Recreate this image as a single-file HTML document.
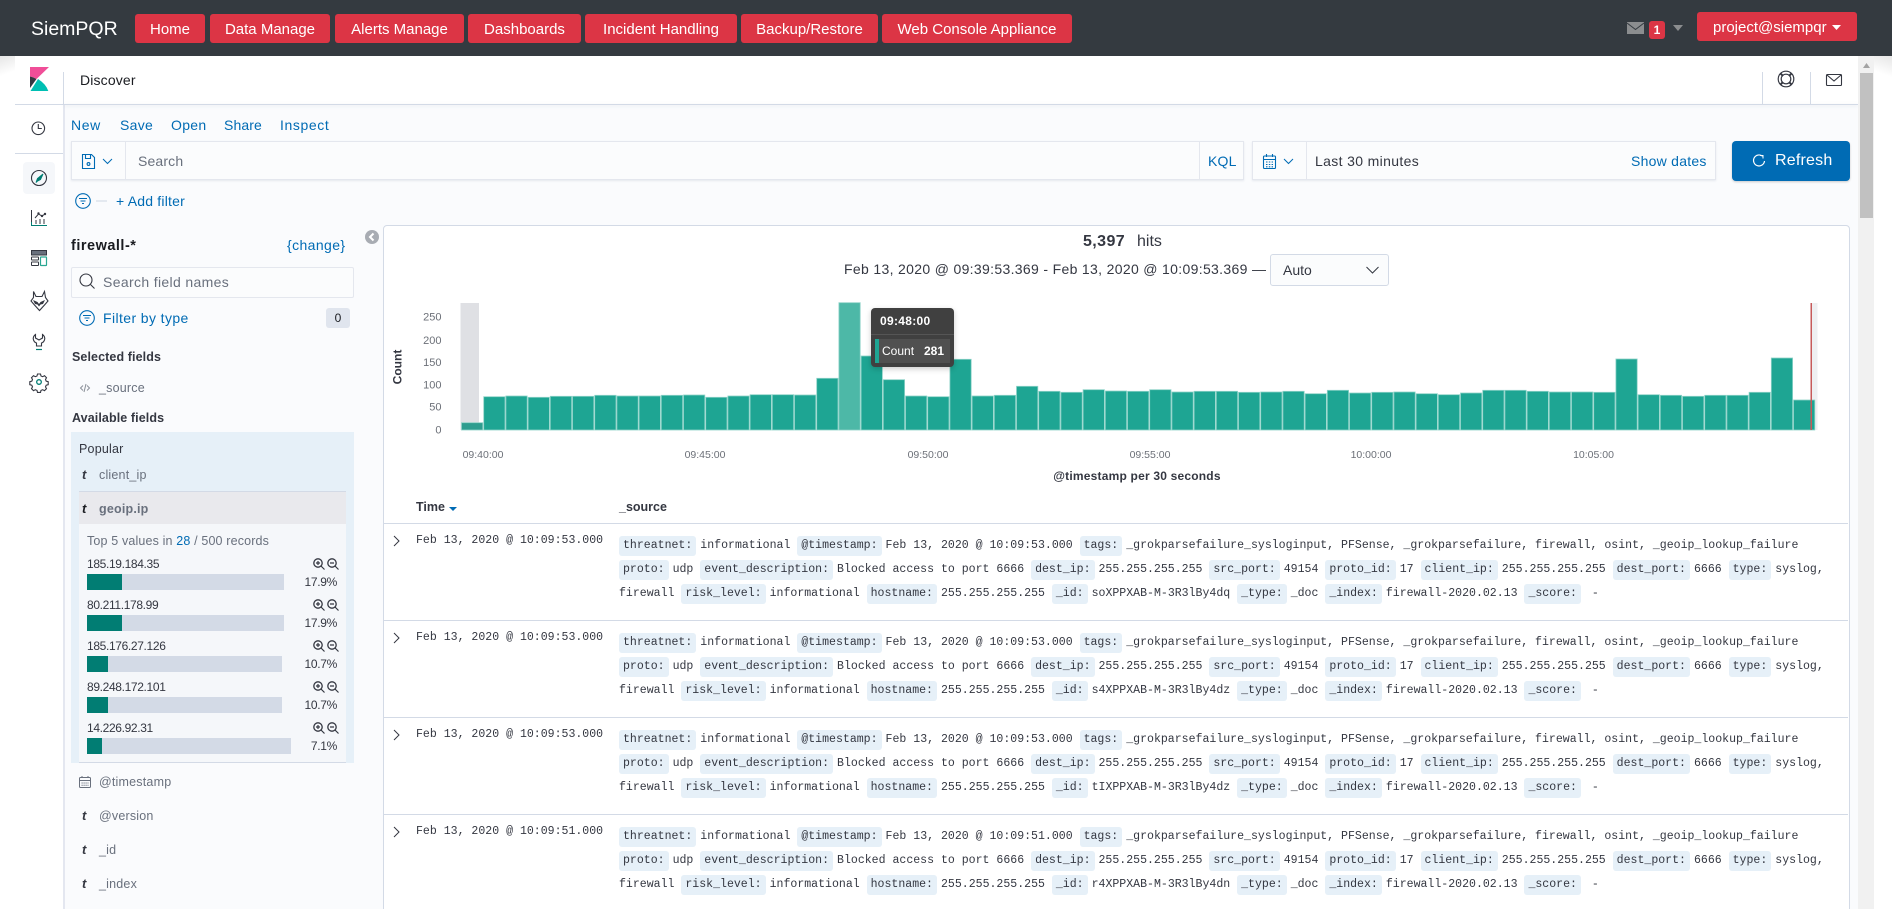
<!DOCTYPE html>
<html><head><meta charset="utf-8"><title>SiemPQR Discover</title>
<style>
*{box-sizing:border-box}
html,body{margin:0;padding:0;width:1892px;height:909px;overflow:hidden;background:#fff;font-family:"Liberation Sans",sans-serif;color:#343741}
#root{position:relative;width:1892px;height:909px;overflow:hidden;background:#fff}
.a{position:absolute;white-space:nowrap}
.t{position:absolute;white-space:nowrap;line-height:20px;font-size:14px}
.btn{position:absolute;top:14px;height:29px;background:#dc3545;border-radius:3px;color:#fff;font-size:15px;line-height:31px;text-align:center;white-space:nowrap}
.l{color:#006bb4}
.f{position:absolute;left:99px;font-size:12.5px;line-height:20px;color:#69707d;white-space:nowrap;letter-spacing:.2px}
.ty{position:absolute;left:82px;font:italic bold 13px/20px "Liberation Sans",sans-serif;color:#343741}
.v{position:absolute;left:87px;font-size:12px;line-height:16px;letter-spacing:-.35px;white-space:nowrap;color:#343741}
.p{position:absolute;right:1555px;font-size:12px;line-height:16px;letter-spacing:-.3px;white-space:nowrap;color:#343741}
.bg{position:absolute;left:87px;height:16px;background:#d3dae6}
.fg{position:absolute;left:87px;height:16px;background:#017d73}
.hr{position:absolute;left:384px;width:1464px;height:1px;background:#d3dae6}
.tm{position:absolute;left:416px;font:11.55px/20px "Liberation Mono",monospace;white-space:pre;color:#343741}
.ch{position:absolute;left:393px;width:7px;height:12px}
.src{position:absolute;left:619px;width:1225px;font:11.55px/24px "Liberation Mono",monospace;color:#343741}
.src div{height:24px;white-space:pre}
.src b{display:inline-block;height:20px;line-height:20px;padding:0 4px;margin-right:4px;background:#e6f0f8;border-radius:3px;font-weight:normal;vertical-align:middle}
.src span{vertical-align:middle}
svg{position:absolute;overflow:visible}
</style></head>
<body><div id="root">
<!-- page surface -->
<div class="a" style="left:64px;top:105px;width:1794px;height:804px;background:#fafbfd"></div>
<div class="a" style="left:63px;top:105px;width:2px;height:804px;background:#e4e7f0"></div>
<div class="a" style="left:0;top:56px;width:15px;height:24px;background:linear-gradient(160deg,#e6e6e6,#fff 70%)"></div>
<div class="a" style="left:1874px;top:56px;width:18px;height:24px;background:linear-gradient(200deg,#e6e6e6,#fff 70%)"></div>

<!-- app header -->
<div class="a" style="left:0;top:0;width:1892px;height:56px;background:#343a40"></div>
<div class="t" style="left:31px;top:19px;font-size:19.5px;color:#fff">SiemPQR</div>
<div class="btn" style="left:135px;width:70px">Home</div>
<div class="btn" style="left:210px;width:120px">Data Manage</div>
<div class="btn" style="left:335px;width:129px">Alerts Manage</div>
<div class="btn" style="left:468px;width:113px">Dashboards</div>
<div class="btn" style="left:585px;width:152px">Incident Handling</div>
<div class="btn" style="left:741px;width:137px">Backup/Restore</div>
<div class="btn" style="left:882px;width:190px">Web Console Appliance</div>
<svg style="left:1627px;top:22px" width="17" height="12" viewBox="0 0 17 12"><rect width="17" height="12" fill="#8b8d8f"/><path d="M0 1l8.500 6.500L17 1" fill="none" stroke="#343a40" stroke-width="1"/></svg>
<div class="a" style="left:1649px;top:21px;width:16px;height:18px;background:#dc3545;border-radius:3px;color:#fff;font:bold 12px/19px 'Liberation Sans',sans-serif;text-align:center">1</div>
<svg style="left:1673px;top:25px" width="10" height="6"><path d="M0 0h10L5 6z" fill="#8b8d8f"/></svg>
<div class="btn" style="left:1697px;top:12px;width:160px;text-align:left;padding-left:16px">project@siempqr</div>
<svg style="left:1832px;top:25px" width="9" height="5"><path d="M0 0h9L4.500 5z" fill="#fff"/></svg>

<!-- Kibana nav -->
<svg style="left:0;top:0" width="70" height="420" viewBox="0 0 70 420">
 <path d="M30 67h19L36.500 79Q33 77 30 76.500z" fill="#f04e98"/>
 <path d="M30 76.500Q33 77 36.500 79L30 88z" fill="#343741"/>
 <path d="M30.500 91L38 79Q46 84 48.300 91z" fill="#00bfb3"/>
 <rect x="15" y="104" width="48" height="1" fill="#d3dae6"/>
 <rect x="15" y="153" width="48" height="1" fill="#d3dae6"/>
 <rect x="63" y="72" width="1" height="33" fill="#d3dae6"/>
 <circle cx="38.300" cy="128.300" r="6.300" fill="none" stroke="#343741" stroke-width="1.100"/>
 <path d="M38.300 124v4.500h3.500" fill="none" stroke="#343741" stroke-width="1.100"/>
 <rect x="23" y="162" width="32" height="32" rx="4" fill="#f5f7fa"/>
 <circle cx="39" cy="178" r="7.500" fill="none" stroke="#343741" stroke-width="1.100"/>
 <path d="M43 174l-2.500 5.500-3 1.500-1.500 1.500 1.500-4z" fill="#017d73" stroke="#017d73"/>
 <path d="M31.500 210v15.500H47" fill="none" stroke="#017d73" stroke-width="1"/>
 <path d="M31.500 210v12" fill="none" stroke="#343741"/>
 <path d="M35 218l3.500-4 3.500 2 3-2" fill="none" stroke="#343741"/>
 <circle cx="38.500" cy="213.500" r="1.200" fill="#343741"/><circle cx="42" cy="216" r="1.200" fill="#343741"/><circle cx="45" cy="214" r="1.200" fill="#343741"/>
 <path d="M36 220v4M40 219v5M44 219v5" stroke="#343741"/>
 <rect x="31.500" y="250.500" width="15" height="4.500" fill="#69707d" stroke="#343741"/>
 <rect x="31.500" y="257" width="7" height="3" rx=".5" fill="none" stroke="#343741"/>
 <rect x="31.500" y="262" width="7" height="3.500" rx=".5" fill="none" stroke="#343741"/>
 <rect x="40.500" y="257" width="6" height="8.500" rx=".5" fill="none" stroke="#2aa792" stroke-width="1.200"/>
 <path d="M33.500 291.500l2.500 5h6l2.500-5 1 6 2.500 3.500-3.500 4-5 5.500-5-5.500-3.500-4 2.500-3.500z" fill="none" stroke="#343741" stroke-width="1.100"/>
 <path d="M33 300l4.500 2 1.500 2 1.500-2 4.500-2-2 4-2.500.5-1.500 2-1.500-2-2.500-.5z" fill="#343741"/>
 <path d="M35.500 334.500v3.500l3.500 2 3.500-2v-3.500q3 2 2 5.500-1 2.500-3 3v3h-5v-3q-2-.5-3-3-1-3.500 2-5.500z" fill="none" stroke="#343741" stroke-width="1.100"/>
 <path d="M36 349.500h6" stroke="#017d73" stroke-width="1.200"/>
 <circle cx="39" cy="382" r="2.300" fill="none" stroke="#017d73" stroke-width="1.300"/>
 <path d="M37.500 374h3l.5 2 1.700.7 1.800-1 2 2-1 1.800.7 1.700 2 .5v3l-2 .5-.7 1.700 1 1.800-2 2-1.800-1-1.700.7-.5 2h-3l-.5-2-1.700-.7-1.800 1-2-2 1-1.800-.7-1.700-2-.5v-3l2-.5.7-1.700-1-1.800 2-2 1.800 1 1.700-.7z" fill="none" stroke="#343741" stroke-width="1.100"/>
</svg>

<!-- top nav -->
<div class="a" style="left:64px;top:104px;width:1794px;height:1px;background:#d3dae6;box-shadow:0 1px 3px rgba(152,162,179,.25)"></div>
<div class="t" style="left:80px;top:70px;letter-spacing:.15px;color:#1a1c21">Discover</div>
<div class="a" style="left:1762px;top:72px;width:1px;height:32px;background:#d3dae6"></div>
<div class="a" style="left:1810px;top:72px;width:1px;height:32px;background:#d3dae6"></div>
<svg style="left:1776px;top:69px" width="20" height="20" viewBox="0 0 20 20" fill="none" stroke="#343741" stroke-width="1.200"><circle cx="10" cy="10" r="7.800"/><circle cx="10" cy="10" r="4.800"/><path d="M4.500 4.500l2.200 2.200M15.500 4.500l-2.200 2.200M4.500 15.500l2.200-2.200M15.500 15.500l-2.200-2.200" stroke-width="2"/></svg>
<svg style="left:1826px;top:74px" width="16" height="12" viewBox="0 0 16 12" fill="none" stroke="#343741" stroke-width="1.100"><rect x=".5" y=".5" width="15" height="11" rx="1"/><path d="M1 1l7 6 7-6"/></svg>

<!-- scrollbar -->
<div class="a" style="left:1858px;top:56px;width:16px;height:853px;background:#f1f1f1"></div>
<div class="a" style="left:1860px;top:73px;width:13px;height:145px;background:#c1c1c1"></div>
<svg style="left:1863px;top:63px" width="7" height="5"><path d="M0 5L3.500 0 7 5z" fill="#a3a3a3"/></svg>

<!-- query bar -->
<div class="t l" style="left:71px;top:115px;letter-spacing:.6px">New</div>
<div class="t l" style="left:120px;top:115px;letter-spacing:.3px">Save</div>
<div class="t l" style="left:171px;top:115px;letter-spacing:.3px">Open</div>
<div class="t l" style="left:224px;top:115px;letter-spacing:.1px">Share</div>
<div class="t l" style="left:280px;top:115px;letter-spacing:.6px">Inspect</div>

<div class="a" style="left:71px;top:141px;width:1173px;height:39px;background:#fbfcfd;border:1px solid #e4e7ee;box-shadow:0 1px 2px rgba(152,162,179,.2)"></div>
<div class="a" style="left:125px;top:141px;width:1px;height:39px;background:#e4e7ee"></div>
<div class="a" style="left:1199px;top:141px;width:1px;height:39px;background:#e4e7ee"></div>
<svg style="left:82px;top:154px" width="34" height="15" viewBox="0 0 34 15" fill="none" stroke="#006bb4" stroke-width="1.100"><path d="M.5.5h9l3 3v11H.5z"/><path d="M3.500.5v4h5v-4"/><circle cx="6.500" cy="10" r="1.400"/><path d="M21 5l4.500 4.500L30 5" stroke-width="1"/></svg>
<div class="t" style="left:138px;top:151px;color:#69707d;letter-spacing:.15px">Search</div>
<div class="t l" style="left:1208px;top:151px;letter-spacing:.2px">KQL</div>

<div class="a" style="left:1252px;top:141px;width:464px;height:39px;background:#fbfcfd;border:1px solid #e4e7ee;box-shadow:0 1px 2px rgba(152,162,179,.2)"></div>
<div class="a" style="left:1306px;top:141px;width:1px;height:39px;background:#e4e7ee"></div>
<svg style="left:1263px;top:154px" width="34" height="15" viewBox="0 0 34 15" fill="none" stroke="#006bb4" stroke-width="1.100"><rect x=".5" y="2" width="12" height="12.500" rx="1"/><path d="M.5 5.500h12M3.500 0v3M9.500 0v3"/><path d="M3 8h7M3 10.500h7M3 12.800h7" stroke-dasharray="1.500 1.300"/><path d="M21 5l4.500 4.500L30 5" stroke-width="1"/></svg>
<div class="t" style="left:1315px;top:151px;letter-spacing:.35px">Last 30 minutes</div>
<div class="t l" style="left:1631px;top:151px;font-size:14px;letter-spacing:.25px">Show dates</div>

<div class="a" style="left:1732px;top:141px;width:118px;height:40px;background:#006bb4;border-radius:4px;box-shadow:0 1px 2px rgba(0,0,0,.2)"></div>
<svg style="left:1752px;top:154px" width="14" height="14" viewBox="0 0 14 14" fill="none" stroke="#fff" stroke-width="1.200"><path d="M10.500 2.200A5.500 5.500 0 1 0 12.500 7"/><path d="M8 1.500h3v3" stroke-width="1"/></svg>
<div class="t" style="left:1775px;top:151px;font-size:16px;color:#fff;letter-spacing:.2px">Refresh</div>

<svg style="left:75px;top:193px" width="32" height="16" viewBox="0 0 32 16" fill="none" stroke="#006bb4" stroke-width="1.100"><circle cx="8" cy="8" r="7.300"/><path d="M4 5.500h8M5.500 8h5M7 10.500h2"/><path d="M21 8h11" stroke="#d3dae6"/></svg>
<div class="t l" style="left:116px;top:191px;letter-spacing:.2px">+ Add filter</div>

<!-- sidebar -->
<div class="t" style="left:71px;top:236px;font-size:14.5px;font-weight:bold;color:#1a1c21;letter-spacing:.5px">firewall-*</div>
<div class="t l" style="left:287px;top:235px;letter-spacing:.4px">{change}</div>
<svg style="left:365px;top:230px" width="14" height="14"><circle cx="7" cy="7" r="7" fill="#a8acb3"/><path d="M8.500 3.500L5 7l3.500 3.500" fill="none" stroke="#fff" stroke-width="2"/></svg>

<div class="a" style="left:71px;top:267px;width:283px;height:31px;background:#fbfcfd;border:1px solid #e4e7ee;border-radius:2px"></div>
<svg style="left:79px;top:273px" width="16" height="16" viewBox="0 0 16 16" fill="none" stroke="#343741" stroke-width="1.100"><circle cx="7" cy="7" r="6"/><path d="M11.500 11.500l4 4"/></svg>
<div class="t" style="left:103px;top:272px;color:#69707d;letter-spacing:.35px">Search field names</div>
<svg style="left:79px;top:310px" width="16" height="16" viewBox="0 0 16 16" fill="none" stroke="#006bb4" stroke-width="1.100"><circle cx="8" cy="8" r="7.300"/><path d="M4 5.500h8M5.500 8h5M7 10.500h2"/></svg>
<div class="t l" style="left:103px;top:308px;letter-spacing:.4px">Filter by type</div>
<div class="a" style="left:326px;top:308px;width:24px;height:20px;background:#e0e5ee;border-radius:3px;font-size:12px;line-height:20px;text-align:center;color:#1a1c21">0</div>

<div class="t" style="left:72px;top:347px;font-size:12.5px;font-weight:bold;letter-spacing:.1px">Selected fields</div>
<svg style="left:80px;top:383px" width="10" height="10" viewBox="0 0 10 10" fill="none" stroke="#8a8f98"><path d="M3 2.500L.5 5 3 7.500M7 2.500L9.500 5 7 7.500M6 1L4 9"/></svg>
<div class="f" style="top:378px">_source</div>
<div class="t" style="left:72px;top:408px;font-size:12.5px;font-weight:bold;letter-spacing:.1px">Available fields</div>

<div class="a" style="left:71px;top:432px;width:283px;height:331px;background:#e6f0f8"></div>
<div class="t" style="left:79px;top:439px;font-size:12.5px;letter-spacing:.2px">Popular</div>
<div class="ty" style="top:465px">t</div>
<div class="f" style="top:465px">client_ip</div>
<div class="a" style="left:79px;top:491px;width:267px;height:33px;background:#e9e9ed;border-top:1px solid #d3dae6"></div>
<div class="ty" style="top:499px;color:#1a1c21">t</div>
<div class="f" style="top:499px;font-weight:bold">geoip.ip</div>
<div class="a" style="left:79px;top:524px;width:267px;height:239px;background:#f5f7fa;border-bottom:1px solid #d3dae6"></div>
<div class="t" style="left:87px;top:531px;font-size:12.5px;color:#69707d;letter-spacing:.15px">Top 5 values in <span class="l">28</span> / 500 records</div>

<svg width="0" height="0" style="left:0;top:0"><defs>
<symbol id="zp" viewBox="0 0 12 12"><circle cx="5" cy="5" r="4.200" fill="none" stroke="#343741" stroke-width="1.300"/><path d="M8 8l3.500 3.500M3 5h4M5 3v4" stroke="#343741" stroke-width="1.200" fill="none"/></symbol>
<symbol id="zm" viewBox="0 0 12 12"><circle cx="5" cy="5" r="4.200" fill="none" stroke="#343741" stroke-width="1.300"/><path d="M8 8l3.500 3.500M3 5h4" stroke="#343741" stroke-width="1.200" fill="none"/></symbol>
</defs></svg>

<div class="v" style="top:556px">185.19.184.35</div>
<div class="bg" style="top:574px;width:197px"></div><div class="fg" style="top:574px;width:35px"></div>
<div class="p" style="top:574px">17.9%</div>
<svg style="left:313px;top:558px" width="12" height="12"><use href="#zp"/></svg><svg style="left:327px;top:558px" width="12" height="12"><use href="#zm"/></svg>

<div class="v" style="top:597px">80.211.178.99</div>
<div class="bg" style="top:615px;width:197px"></div><div class="fg" style="top:615px;width:35px"></div>
<div class="p" style="top:615px">17.9%</div>
<svg style="left:313px;top:599px" width="12" height="12"><use href="#zp"/></svg><svg style="left:327px;top:599px" width="12" height="12"><use href="#zm"/></svg>

<div class="v" style="top:638px">185.176.27.126</div>
<div class="bg" style="top:656px;width:195px"></div><div class="fg" style="top:656px;width:21px"></div>
<div class="p" style="top:656px">10.7%</div>
<svg style="left:313px;top:640px" width="12" height="12"><use href="#zp"/></svg><svg style="left:327px;top:640px" width="12" height="12"><use href="#zm"/></svg>

<div class="v" style="top:679px">89.248.172.101</div>
<div class="bg" style="top:697px;width:195px"></div><div class="fg" style="top:697px;width:21px"></div>
<div class="p" style="top:697px">10.7%</div>
<svg style="left:313px;top:681px" width="12" height="12"><use href="#zp"/></svg><svg style="left:327px;top:681px" width="12" height="12"><use href="#zm"/></svg>

<div class="v" style="top:720px">14.226.92.31</div>
<div class="bg" style="top:738px;width:204px"></div><div class="fg" style="top:738px;width:15px"></div>
<div class="p" style="top:738px">7.1%</div>
<svg style="left:313px;top:722px" width="12" height="12"><use href="#zp"/></svg><svg style="left:327px;top:722px" width="12" height="12"><use href="#zm"/></svg>

<svg style="left:79px;top:776px" width="12" height="12" viewBox="0 0 12 12" fill="none" stroke="#69707d"><rect x=".5" y="1.500" width="11" height="10" rx="1"/><path d="M.5 4.500h11M3 0v2M9 0v2"/><path d="M2.500 7h7M2.500 9.300h7" stroke-dasharray="1.200 .8"/></svg>
<div class="f" style="top:772px">@timestamp</div>
<div class="ty" style="top:806px">t</div><div class="f" style="top:806px">@version</div>
<div class="ty" style="top:840px">t</div><div class="f" style="top:840px">_id</div>
<div class="ty" style="top:874px">t</div><div class="f" style="top:874px">_index</div>

<!-- results card -->
<div class="a" style="left:383px;top:225px;width:1467px;height:700px;background:#fff;border:1px solid #d3dae6;border-radius:4px"></div>
<div class="t" style="left:1083px;top:232px;font-size:16px;font-weight:bold;letter-spacing:.4px">5,397</div>
<div class="t" style="left:1137px;top:232px;font-size:16px">hits</div>
<div class="t" style="left:844px;top:259px;font-size:14px;letter-spacing:.33px">Feb 13, 2020 @ 09:39:53.369 - Feb 13, 2020 @ 10:09:53.369 —</div>
<div class="a" style="left:1270px;top:254px;width:119px;height:32px;background:#fbfcfd;border:1px solid #d3dae6;border-radius:3px"></div>
<div class="t" style="left:1283px;top:260px;font-size:14px">Auto</div>
<svg style="left:1366px;top:266px" width="13" height="8" fill="none" stroke="#343741"><path d="M.5 1l6 6 6-6"/></svg>

<!-- chart -->
<svg style="left:0;top:0" width="1892" height="909" viewBox="0 0 1892 909">
 <rect x="460.500" y="303" width="18.500" height="127" fill="#dfe0e4"/>
 <rect x="1811" y="303" width="6.500" height="127" fill="#eeeff1"/>
 <g fill="#1ea593" stroke="#8fd3c8" stroke-width=".8">
  <rect x="461.500" y="422.700" width="21.300" height="7.300" fill="#2e9d8f"/>
  <rect x="483.700" y="396.700" width="21.300" height="33.300"/>
  <rect x="505.900" y="396" width="21.300" height="34"/>
  <rect x="528.100" y="397.300" width="21.300" height="32.700"/>
  <rect x="550.300" y="396.300" width="21.300" height="33.700"/>
  <rect x="572.500" y="396.300" width="21.300" height="33.700"/>
  <rect x="594.700" y="395.300" width="21.300" height="34.700"/>
  <rect x="616.900" y="396" width="21.300" height="34"/>
  <rect x="639.100" y="396" width="21.300" height="34"/>
  <rect x="661.300" y="395.300" width="21.300" height="34.700"/>
  <rect x="683.500" y="395" width="21.300" height="35"/>
  <rect x="705.700" y="397.300" width="21.300" height="32.700"/>
  <rect x="727.900" y="396" width="21.300" height="34"/>
  <rect x="750.100" y="394.700" width="21.300" height="35.300"/>
  <rect x="772.300" y="394.700" width="21.300" height="35.300"/>
  <rect x="794.500" y="395" width="21.300" height="35"/>
  <rect x="816.700" y="378.300" width="21.300" height="51.700"/>
  <rect x="838.900" y="302.700" width="21.300" height="127.300" fill="#4db8a7"/>
  <rect x="861.100" y="356" width="21.300" height="74"/>
  <rect x="883.300" y="379.700" width="21.300" height="50.300"/>
  <rect x="905.500" y="396" width="21.300" height="34"/>
  <rect x="927.700" y="396.700" width="21.300" height="33.300"/>
  <rect x="949.900" y="359.300" width="21.300" height="70.700"/>
  <rect x="972.100" y="396" width="21.300" height="34"/>
  <rect x="994.300" y="395.300" width="21.300" height="34.700"/>
  <rect x="1016.500" y="386.300" width="21.300" height="43.700"/>
  <rect x="1038.700" y="391.300" width="21.300" height="38.700"/>
  <rect x="1060.900" y="392.300" width="21.300" height="37.700"/>
  <rect x="1083.100" y="389.700" width="21.300" height="40.300"/>
  <rect x="1105.300" y="391" width="21.300" height="39"/>
  <rect x="1127.500" y="391.300" width="21.300" height="38.700"/>
  <rect x="1149.700" y="389.700" width="21.300" height="40.300"/>
  <rect x="1171.900" y="392" width="21.300" height="38"/>
  <rect x="1194.100" y="391.300" width="21.300" height="38.700"/>
  <rect x="1216.300" y="391.300" width="21.300" height="38.700"/>
  <rect x="1238.500" y="392.300" width="21.300" height="37.700"/>
  <rect x="1260.700" y="392" width="21.300" height="38"/>
  <rect x="1282.900" y="391.300" width="21.300" height="38.700"/>
  <rect x="1305.100" y="393.700" width="21.300" height="36.300"/>
  <rect x="1327.300" y="390.300" width="21.300" height="39.700"/>
  <rect x="1349.500" y="393" width="21.300" height="37"/>
  <rect x="1371.700" y="392.300" width="21.300" height="37.700"/>
  <rect x="1393.900" y="392" width="21.300" height="38"/>
  <rect x="1416.100" y="393.700" width="21.300" height="36.300"/>
  <rect x="1438.300" y="394.700" width="21.300" height="35.300"/>
  <rect x="1460.500" y="393" width="21.300" height="37"/>
  <rect x="1482.700" y="390.300" width="21.300" height="39.700"/>
  <rect x="1504.900" y="390.300" width="21.300" height="39.700"/>
  <rect x="1527.100" y="391.300" width="21.300" height="38.700"/>
  <rect x="1549.300" y="392" width="21.300" height="38"/>
  <rect x="1571.500" y="392" width="21.300" height="38"/>
  <rect x="1593.700" y="392.300" width="21.300" height="37.700"/>
  <rect x="1615.900" y="359" width="21.300" height="71"/>
  <rect x="1638.100" y="394.700" width="21.300" height="35.300"/>
  <rect x="1660.300" y="395.300" width="21.300" height="34.700"/>
  <rect x="1682.500" y="396.300" width="21.300" height="33.700"/>
  <rect x="1704.700" y="395.300" width="21.300" height="34.700"/>
  <rect x="1726.900" y="395.300" width="21.300" height="34.700"/>
  <rect x="1749.100" y="392.300" width="21.300" height="37.700"/>
  <rect x="1771.300" y="358" width="21.300" height="72"/>
  <rect x="1793.500" y="400" width="21.300" height="30"/>
 </g>
 <rect x="1810.500" y="303" width="1.500" height="127" fill="#c65a5a"/>
 <g font-family="Liberation Sans, sans-serif" font-size="11" fill="#6c7078" text-anchor="end">
  <text x="441.500" y="320.500">250</text><text x="441.500" y="344">200</text><text x="441.500" y="366">150</text><text x="441.500" y="388.500">100</text><text x="441.500" y="410.500">50</text><text x="441.500" y="433.500">0</text>
 </g>
 <g font-family="Liberation Sans, sans-serif" font-size="10.500" fill="#6c7078" text-anchor="middle">
  <text x="483" y="458">09:40:00</text><text x="705" y="458">09:45:00</text><text x="928" y="458">09:50:00</text><text x="1150" y="458">09:55:00</text><text x="1371" y="458">10:00:00</text><text x="1593.500" y="458">10:05:00</text>
 </g>
 <text transform="translate(401.500 367) rotate(-90)" font-family="Liberation Sans, sans-serif" font-size="12" font-weight="bold" fill="#343741" text-anchor="middle">Count</text>
 <text x="1137" y="480" font-family="Liberation Sans, sans-serif" font-size="12" font-weight="bold" fill="#343741" text-anchor="middle" letter-spacing=".2">@timestamp per 30 seconds</text>
</svg>

<!-- tooltip -->
<div class="a" style="left:871px;top:308px;width:83px;height:59px;background:#404040;border-radius:4px;box-shadow:0 2px 6px rgba(0,0,0,.2)"></div>
<div class="a" style="left:871px;top:334px;width:83px;height:1px;background:#555"></div>
<div class="a" style="left:875px;top:339px;width:75px;height:24px;background:#505050"></div>
<div class="a" style="left:875px;top:339px;width:4px;height:24px;background:#1ea593"></div>
<div class="t" style="left:880px;top:311px;font-size:12px;font-weight:bold;color:#fff;letter-spacing:.3px">09:48:00</div>
<div class="t" style="left:882px;top:341px;font-size:12px;color:#fff">Count</div>
<div class="t" style="left:924px;top:341px;font-size:12px;font-weight:bold;color:#fff">281</div>

<!-- table -->
<div class="t" style="left:416px;top:497px;font-size:12.5px;font-weight:bold">Time</div>
<svg style="left:449px;top:507px" width="8" height="4"><path d="M0 0h8L4 4z" fill="#006bb4"/></svg>
<div class="t" style="left:619px;top:497px;font-size:12.5px;font-weight:bold">_source</div>

<div class="hr" style="top:523px"></div>
<svg class="ch" style="top:535px" viewBox="0 0 7 12" fill="none" stroke="#343741"><path d="M1 1l5 5-5 5"/></svg>
<div class="tm" style="top:531px">Feb 13, 2020 @ 10:09:53.000</div>
<div class="src" style="top:534px"><div><b>threatnet:</b><span>informational </span><b>@timestamp:</b><span>Feb 13, 2020 @ 10:09:53.000 </span><b>tags:</b><span>_grokparsefailure_sysloginput, PFSense, _grokparsefailure, firewall, osint, _geoip_lookup_failure</span></div><div><b>proto:</b><span>udp </span><b>event_description:</b><span>Blocked access to port 6666 </span><b>dest_ip:</b><span>255.255.255.255 </span><b>src_port:</b><span>49154 </span><b>proto_id:</b><span>17 </span><b>client_ip:</b><span>255.255.255.255 </span><b>dest_port:</b><span>6666 </span><b>type:</b><span>syslog,</span></div><div><span>firewall </span><b>risk_level:</b><span>informational </span><b>hostname:</b><span>255.255.255.255 </span><b>_id:</b><span>soXPPXAB-M-3R3lBy4dq </span><b>_type:</b><span>_doc </span><b>_index:</b><span>firewall-2020.02.13 </span><b>_score:</b><span> -</span></div></div>

<div class="hr" style="top:620px"></div>
<svg class="ch" style="top:632px" viewBox="0 0 7 12" fill="none" stroke="#343741"><path d="M1 1l5 5-5 5"/></svg>
<div class="tm" style="top:628px">Feb 13, 2020 @ 10:09:53.000</div>
<div class="src" style="top:631px"><div><b>threatnet:</b><span>informational </span><b>@timestamp:</b><span>Feb 13, 2020 @ 10:09:53.000 </span><b>tags:</b><span>_grokparsefailure_sysloginput, PFSense, _grokparsefailure, firewall, osint, _geoip_lookup_failure</span></div><div><b>proto:</b><span>udp </span><b>event_description:</b><span>Blocked access to port 6666 </span><b>dest_ip:</b><span>255.255.255.255 </span><b>src_port:</b><span>49154 </span><b>proto_id:</b><span>17 </span><b>client_ip:</b><span>255.255.255.255 </span><b>dest_port:</b><span>6666 </span><b>type:</b><span>syslog,</span></div><div><span>firewall </span><b>risk_level:</b><span>informational </span><b>hostname:</b><span>255.255.255.255 </span><b>_id:</b><span>s4XPPXAB-M-3R3lBy4dz </span><b>_type:</b><span>_doc </span><b>_index:</b><span>firewall-2020.02.13 </span><b>_score:</b><span> -</span></div></div>

<div class="hr" style="top:717px"></div>
<svg class="ch" style="top:729px" viewBox="0 0 7 12" fill="none" stroke="#343741"><path d="M1 1l5 5-5 5"/></svg>
<div class="tm" style="top:725px">Feb 13, 2020 @ 10:09:53.000</div>
<div class="src" style="top:728px"><div><b>threatnet:</b><span>informational </span><b>@timestamp:</b><span>Feb 13, 2020 @ 10:09:53.000 </span><b>tags:</b><span>_grokparsefailure_sysloginput, PFSense, _grokparsefailure, firewall, osint, _geoip_lookup_failure</span></div><div><b>proto:</b><span>udp </span><b>event_description:</b><span>Blocked access to port 6666 </span><b>dest_ip:</b><span>255.255.255.255 </span><b>src_port:</b><span>49154 </span><b>proto_id:</b><span>17 </span><b>client_ip:</b><span>255.255.255.255 </span><b>dest_port:</b><span>6666 </span><b>type:</b><span>syslog,</span></div><div><span>firewall </span><b>risk_level:</b><span>informational </span><b>hostname:</b><span>255.255.255.255 </span><b>_id:</b><span>tIXPPXAB-M-3R3lBy4dz </span><b>_type:</b><span>_doc </span><b>_index:</b><span>firewall-2020.02.13 </span><b>_score:</b><span> -</span></div></div>

<div class="hr" style="top:814px"></div>
<svg class="ch" style="top:826px" viewBox="0 0 7 12" fill="none" stroke="#343741"><path d="M1 1l5 5-5 5"/></svg>
<div class="tm" style="top:822px">Feb 13, 2020 @ 10:09:51.000</div>
<div class="src" style="top:825px"><div><b>threatnet:</b><span>informational </span><b>@timestamp:</b><span>Feb 13, 2020 @ 10:09:51.000 </span><b>tags:</b><span>_grokparsefailure_sysloginput, PFSense, _grokparsefailure, firewall, osint, _geoip_lookup_failure</span></div><div><b>proto:</b><span>udp </span><b>event_description:</b><span>Blocked access to port 6666 </span><b>dest_ip:</b><span>255.255.255.255 </span><b>src_port:</b><span>49154 </span><b>proto_id:</b><span>17 </span><b>client_ip:</b><span>255.255.255.255 </span><b>dest_port:</b><span>6666 </span><b>type:</b><span>syslog,</span></div><div><span>firewall </span><b>risk_level:</b><span>informational </span><b>hostname:</b><span>255.255.255.255 </span><b>_id:</b><span>r4XPPXAB-M-3R3lBy4dn </span><b>_type:</b><span>_doc </span><b>_index:</b><span>firewall-2020.02.13 </span><b>_score:</b><span> -</span></div></div>
</div></body></html>
